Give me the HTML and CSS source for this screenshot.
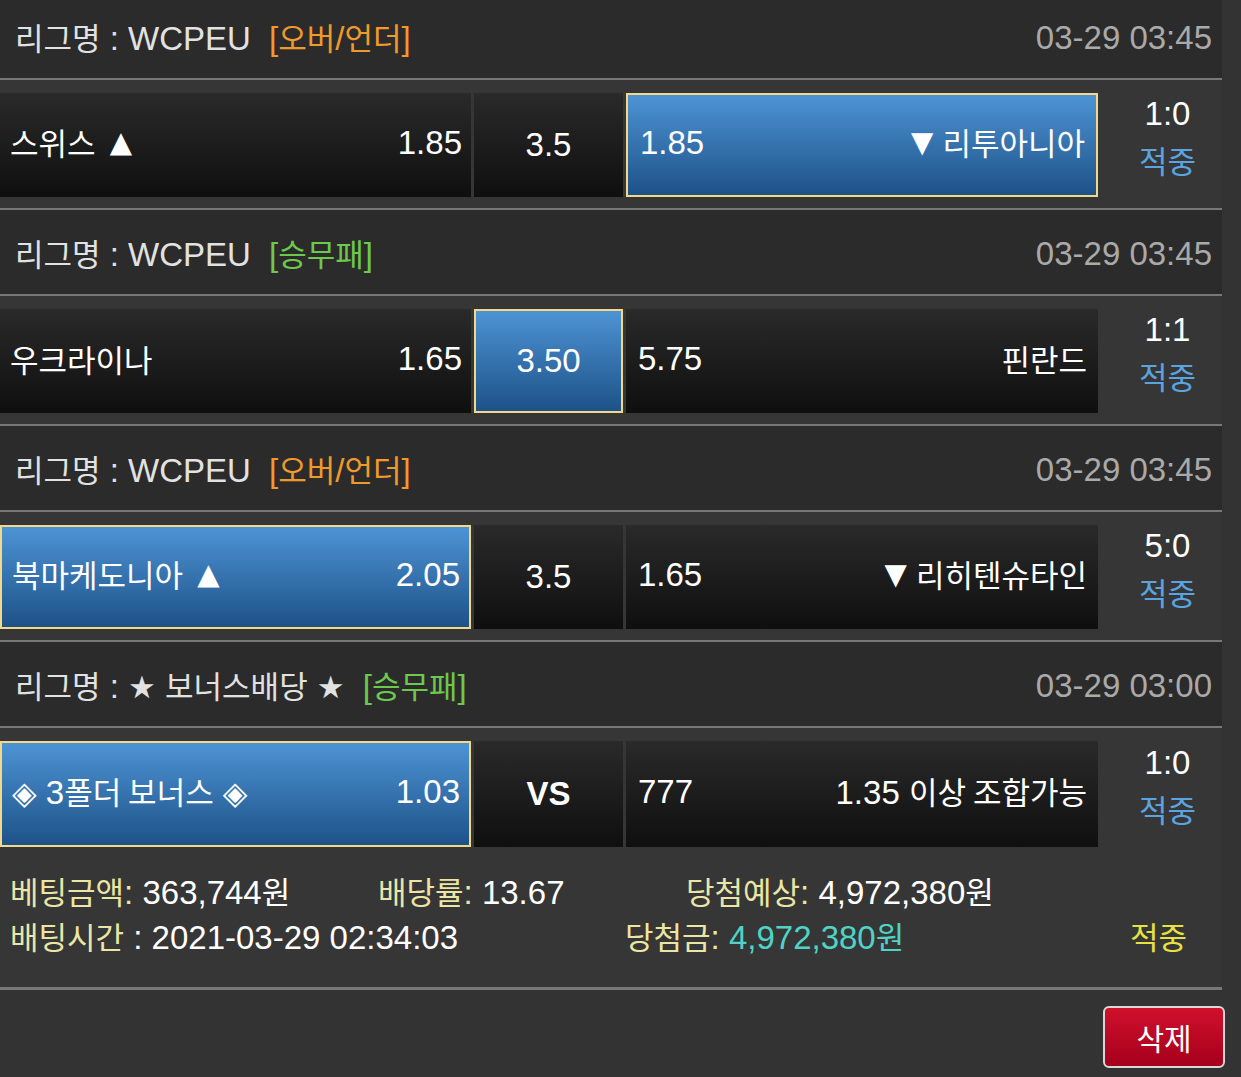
FILE: index.html
```html
<!DOCTYPE html>
<html>
<head>
  <meta charset="utf-8">
  <title>Bet Slip</title>
  <link rel="stylesheet" href="styles.css">
</head>
<body>
  <div class="slip">
    <div class="league">
      <div class="league-name"><i>리그명</i> : WCPEU <span class="type ou">[<i>오버</i>/<i>언더</i>]</span></div>
      <div class="date">03-29 03:45</div>
    </div>
    <div class="match">
      <div class="cell home"><span><i>스위스</i> <b class="tri">▲</b></span><span>1.85</span></div>
      <div class="cell draw">3.5</div>
      <div class="cell away picked"><span>1.85</span><span><b class="tri">▼</b> <i>리투아니아</i></span></div>
      <div class="result"><span>1:0</span><i class="hit">적중</i></div>
    </div>

    <div class="league">
      <div class="league-name"><i>리그명</i> : WCPEU <span class="type wdl">[<i>승무패</i>]</span></div>
      <div class="date">03-29 03:45</div>
    </div>
    <div class="match">
      <div class="cell home"><i>우크라이나</i><span>1.65</span></div>
      <div class="cell draw picked">3.50</div>
      <div class="cell away"><span>5.75</span><i>핀란드</i></div>
      <div class="result"><span>1:1</span><i class="hit">적중</i></div>
    </div>

    <div class="league">
      <div class="league-name"><i>리그명</i> : WCPEU <span class="type ou">[<i>오버</i>/<i>언더</i>]</span></div>
      <div class="date">03-29 03:45</div>
    </div>
    <div class="match">
      <div class="cell home picked"><span><i>북마케도니아</i> <b class="tri">▲</b></span><span>2.05</span></div>
      <div class="cell draw">3.5</div>
      <div class="cell away"><span>1.65</span><span><b class="tri">▼</b> <i>리히텐슈타인</i></span></div>
      <div class="result"><span>5:0</span><i class="hit">적중</i></div>
    </div>

    <div class="league">
      <div class="league-name"><i>리그명</i> : <b class="star">★</b> <i>보너스배당</i> <b class="star">★</b> <span class="type wdl">[<i>승무패</i>]</span></div>
      <div class="date">03-29 03:00</div>
    </div>
    <div class="match last">
      <div class="cell home picked"><span><b class="dia">◈</b> 3<i>폴더 보너스</i> <b class="dia">◈</b></span><span>1.03</span></div>
      <div class="cell draw vs">VS</div>
      <div class="cell away"><span>777</span><span>1.35 <i>이상 조합가능</i></span></div>
      <div class="result"><span>1:0</span><i class="hit">적중</i></div>
    </div>

    <div class="summary">
      <div class="sum-line">
        <span class="s1"><i class="label">베팅금액</i><em class="label">:</em> 363,744<i>원</i></span>
        <span class="s2"><i class="label">배당률</i><em class="label">:</em> 13.67</span>
        <span><i class="label">당첨예상</i><em class="label">:</em> 4,972,380<i>원</i></span>
      </div>
      <div class="sum-line">
        <span class="s3"><i class="label">배팅시간</i> : 2021-03-29 02:34:03</span>
        <span class="s4"><i class="label">당첨금</i><em class="label">:</em> <em class="prize">4,972,380<i>원</i></em></span>
        <i class="won">적중</i>
      </div>
    </div>
    <div class="actions">
      <button class="delete">삭제</button>
    </div>
  </div>
</body>
</html>
```

FILE: styles.css
```css
body {
  margin: 0;
  background: #333;
  font-family: "Liberation Sans", "Noto Sans CJK KR", sans-serif;
  font-size: 33px;
  color: #fff;
}
/* hangul runs are set a little smaller than the latin text */
i {
  font-style: normal;
  font-family: "Noto Sans CJK KR", sans-serif;
  font-size: 31px;
}
em { font-style: normal; }
b { font-weight: normal; }
.slip {
  width: 1222px;
  margin-top: -6px;
}
.league {
  height: 86px;
  background: #2b2b2b;
  border-bottom: 2px solid #777;
  display: flex;
  align-items: center;
  justify-content: space-between;
  padding: 4px 10px 0 15px;
  box-sizing: border-box;
  color: #e2e2e2;
  line-height: 40px;
}
.league .type { margin-left: 9px; }
.type.ou { color: #f09a2c; }
.type.wdl { color: #6cc94c; }
.date { color: #a9a9a9; }
.star { font-family: "DejaVu Sans", sans-serif; font-size: 31px; }
.tri { font-family: "DejaVu Sans", sans-serif; font-size: 29px; vertical-align: 3px; }
.home .tri { margin-left: 5px; }
.dia { font-family: "DejaVu Sans", sans-serif; font-size: 32px; }
.match {
  height: 130px;
  box-sizing: border-box;
  padding: 13px 0 11px;
  background: #363636;
  border-bottom: 2px solid #777;
  display: flex;
  gap: 3px;
  line-height: 40px;
}
.match.last { border-bottom: none; }
.cell {
  background: linear-gradient(#2a2a2a, #0f0f0f);
  display: flex;
  align-items: center;
  justify-content: space-between;
  box-sizing: border-box;
  padding-bottom: 4px;
}
.cell.home { width: 471px; padding-left: 10px; padding-right: 9px; }
.cell.draw { width: 149px; justify-content: center; padding-bottom: 0; }
.cell.away { width: 472px; padding-left: 12px; padding-right: 11px; }
.cell.vs { font-weight: bold; }
.cell.picked {
  background: linear-gradient(#4d93d4, #1d5288);
  border: 2px solid #f2d98a;
}
.result {
  flex: 1;
  display: flex;
  flex-direction: column;
  align-items: center;
  justify-content: center;
  line-height: 46px;
  padding: 0 0 16px 12px;
}
.result .hit { color: #5ba4e0; }
.summary {
  background: #363636;
  height: 132px;
  box-sizing: border-box;
  padding: 10px 10px 0;
  border-bottom: 3px solid #777;
}
.sum-line { display: flex; white-space: nowrap; height: 45px; line-height: 45px; }
.summary .label { color: #ece6a6; }
.summary .prize { color: #4fd3c6; }
.s1 { width: 368px; }
.s2 { width: 308px; }
.s3 { width: 615px; }
.s4 { width: 505px; }
.won { color: #e6e244; }
.actions {
  display: flex;
  justify-content: flex-end;
  padding-top: 16px;
  margin-right: -3px;
}
button.delete {
  width: 122px;
  height: 62px;
  background: linear-gradient(#d0102c, #a5001c);
  border: 2px solid #d8d8d8;
  border-radius: 6px;
  color: #fff;
  font-family: "Noto Sans CJK KR", sans-serif;
  font-size: 30px;
  cursor: pointer;
}
```
